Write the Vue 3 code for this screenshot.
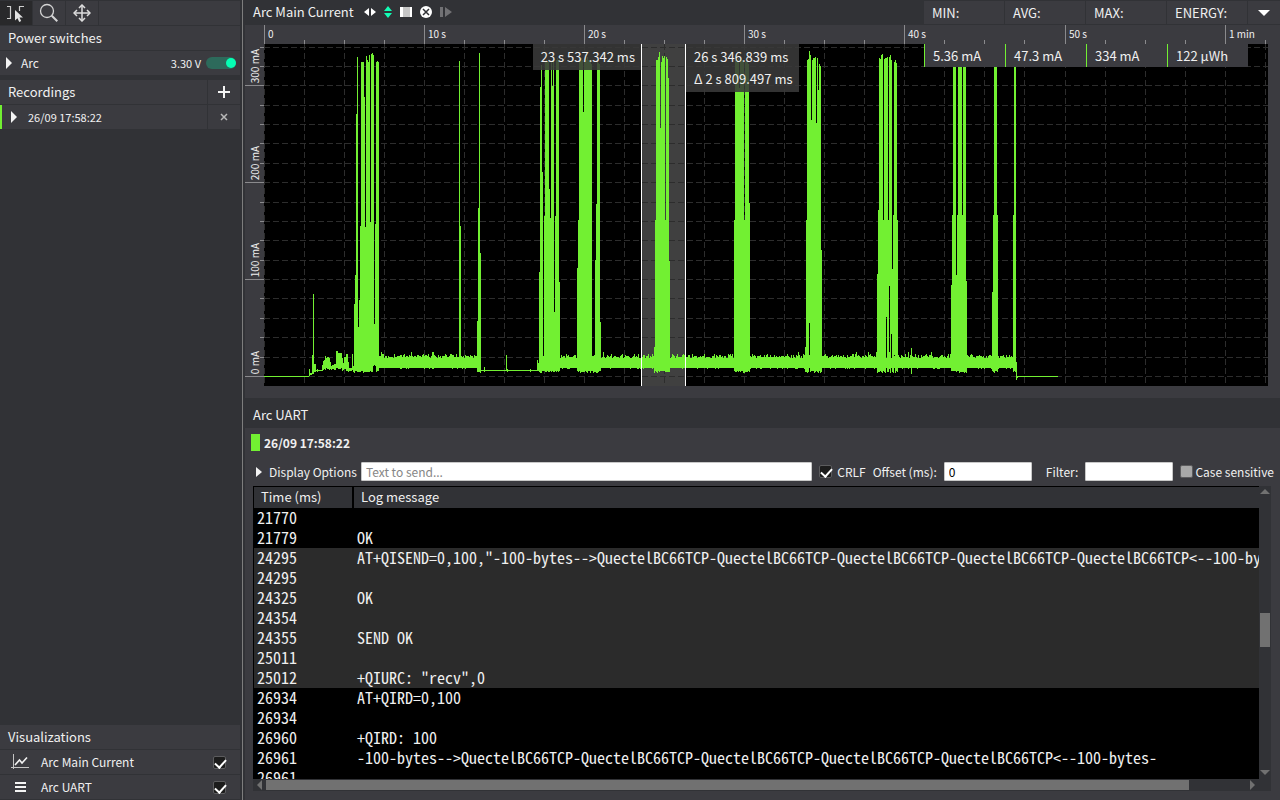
<script setup>
import { ref } from 'vue'

const GRID_LEFT = 264
const GRID_TOP = 44
const PLOT_W = 1004
const PLOT_H = 342

const pctX = (x) => ((x - GRID_LEFT) / PLOT_W) * 100 + '%'
const pctY = (y) => ((y - GRID_TOP) / PLOT_H) * 100 + '%'

const timeNames = { 0: '0', 4: '10 s', 8: '20 s', 12: '30 s', 16: '40 s', 20: '50 s', 24: '1 min' }
const timeTicks = Array.from({ length: 26 }, (_, i) => ({
  x: Math.floor(264.2 + i * 40.04),
  label: timeNames[i],
}))
const currentNames = { 0: '0 mA', 5: '100 mA', 10: '200 mA', 15: '300 mA' }
const currentTicks = Array.from({ length: 18 }, (_, i) => ({
  y: Math.round(376 - i * 19.38),
  label: currentNames[i],
}))

// Consecutive one-pixel columns of each burst: first x, then the top of every column.
const bursts = [
  [354, [304, 275, 114, 57, 327, 300, 226, 62, 62, 62, 97, 227, 56, 60, 62, 55, 222, 54, 53, 55, 324, 224, 62, 61, 62]],
  [459, [61, 226]],
  [477, [321, 208, 53, 253]],
  [537, [360, 363, 272, 87, 65, 172, 357, 216, 61, 60, 62, 61, 189, 218, 62, 86, 60, 312, 216, 60, 58, 60, 282]],
  [577, [268, 220, 60, 59, 58, 60, 112, 62, 58, 60, 57, 60, 60, 62, 64, 356, 356, 355, 260, 204, 62, 63, 64, 322]],
  [654, [347, 220, 60, 60, 57, 52, 128, 62, 56, 58, 56, 220, 57, 59, 78, 261]],
  [734, [220, 60, 62, 60, 58, 88, 60, 58, 60, 62, 220, 62, 60, 62, 64, 203]],
  [805, [347, 220, 60, 59, 51, 55, 120, 60, 58, 58, 57, 123, 58, 90, 64, 66, 250]],
  [877, [274, 210, 58, 59, 55, 54, 220, 59, 58, 58, 57, 220, 57, 55, 60, 269, 215, 62, 60, 63, 220]],
  [951, [285, 215, 60, 58, 60, 275, 215, 60, 58, 57, 60, 215, 60, 59, 60, 281]],
  [992, [292, 215, 60, 58, 60, 215]],
  [1013, [215, 60, 60]],
]
const cutOff = { 809: 323, 886: 317, 889: 286, 891: 334, 894: 355, 375: 366, 374: 365, 373: 366 }

const startup = [
  [264, 45, 376, 377], [309, 1, 369, 376], [310, 2, 373, 375], [312, 1, 355, 374], [313, 1, 294, 374],
  [314, 2, 364, 372], [316, 7, 370, 371], [317, 1, 369, 372], [322, 1, 365, 371], [323, 1, 361, 370],
  [324, 1, 360, 369], [325, 1, 356, 370], [326, 1, 358, 368], [327, 2, 357, 369], [329, 1, 358, 370],
  [330, 1, 362, 369], [331, 1, 366, 370], [332, 2, 365, 369], [334, 2, 364, 370], [336, 2, 351, 368],
  [338, 3, 353, 369], [341, 1, 353, 368], [342, 1, 358, 371], [343, 1, 363, 370], [344, 2, 357, 369],
  [346, 2, 354, 371], [348, 1, 362, 372], [349, 3, 368, 371], [352, 1, 354, 370], [353, 1, 366, 372],
  [481, 56, 370, 371], [484, 1, 367, 372], [506, 1, 355, 371], [507, 1, 369, 372], [530, 1, 369, 372],
  [1016, 1, 362, 380], [1017, 1, 376, 378], [1018, 40, 376, 377],
]

const noise = (n) => {
  const v = Math.sin(n * 127.1) * 43758.5453
  return v - Math.floor(v)
}
const columns = [...startup]
for (let x = 379; x < 1016; x++) {
  if (x >= 480 && x < 539) continue
  const a = noise(x)
  const top = a > 0.97 ? 352 : a > 0.88 ? 354 : a > 0.7 ? 355 : a > 0.4 ? 356 : a > 0.12 ? 357 : 358
  columns.push([x, 1, top, noise(x + 5000) > 0.85 ? 369 : 368])
}
for (const [start, tops] of bursts) {
  tops.forEach((top, i) => {
    const x = start + i
    const low = start === 459 ? 368 : 371 + Math.floor(noise(x + 900) * 2.4)
    columns.push([x, 1, top, cutOff[x] ?? low])
  })
}
columns.push([911, 1, 348, 374])
const signal = columns.map(([x, w, t, b]) => `M${x} ${t}h${w}V${b}h-${w}z`).join('')

const stats = [
  { name: 'MIN:', value: '5.36 mA' },
  { name: 'AVG:', value: '47.3 mA' },
  { name: 'MAX:', value: '334 mA' },
  { name: 'ENERGY:', value: '122 μWh' },
]

const bytes = '-100-bytes-->QuectelBC66TCP-QuectelBC66TCP-QuectelBC66TCP-QuectelBC66TCP-QuectelBC66TCP<--100-bytes-'
const log = [
  ['21770', '', false],
  ['21779', 'OK', false],
  ['24295', 'AT+QISEND=0,100,"' + bytes + '"', true],
  ['24295', '', true],
  ['24325', 'OK', true],
  ['24354', '', true],
  ['24355', 'SEND OK', true],
  ['25011', '', true],
  ['25012', '+QIURC: "recv",0', true],
  ['26934', 'AT+QIRD=0,100', false],
  ['26934', '', false],
  ['26960', '+QIRD: 100', false],
  ['26961', bytes, false],
  ['26961', '', false],
]

const showCurrent = ref(true)
const showUart = ref(true)
const powerOn = ref(true)
const message = ref('')
const crlf = ref(true)
const offset = ref('0')
const filter = ref('')
const caseSensitive = ref(false)
</script>

<template>
  <div class="app">
    <aside class="sidebar">
      <div class="row tools">
        <button class="tool active" aria-label="Select">
          <svg width="20" height="20" viewBox="0 0 20 20"><path d="M1 3.500h3.500v12H1M13.500 8V3.500H18" fill="none" stroke="#cfcfcf" stroke-width="1.200" /><path d="M9 7v10.500l2.500-2.200 1.700 3.700 2-1-1.700-3.500H17z" fill="#e2e2e2" /></svg>
        </button>
        <button class="tool" aria-label="Zoom">
          <svg width="20" height="20" viewBox="0 0 20 20"><circle cx="8" cy="8" r="6.500" fill="none" stroke="#d4d4d4" stroke-width="1.300" /><path d="M12.800 12.800l5.500 5.500" stroke="#d4d4d4" stroke-width="2" /></svg>
        </button>
        <button class="tool" aria-label="Pan">
          <svg width="18" height="18" viewBox="0 0 18 18"><path d="M9 2v14M2 9h14" stroke="#dedede" stroke-width="1.500" /><path d="M6 4l3-3 3 3M6 14l3 3 3-3M4 6L1 9l3 3M14 6l3 3-3 3" fill="none" stroke="#dedede" stroke-width="1.500" /></svg>
        </button>
        <span class="fill"></span>
      </div>
      <h2 class="row title">Power switches</h2>
      <div class="row power">
        <svg class="arrow" width="6" height="12" viewBox="0 0 6 12"><path d="M0 0l6 6-6 6z" fill="#f4f4f4" /></svg>
        <span class="grow">Arc</span>
        <span class="small">3.30 V</span>
        <input v-model="powerOn" class="switch" type="checkbox" aria-label="Arc power" />
      </div>
      <div class="row recordings">
        <h2 class="title grow">Recordings</h2>
        <button class="side-button" aria-label="Add recording">
          <svg width="12" height="12" viewBox="0 0 12 12"><path d="M6 0v12M0 6h12" stroke="#f4f4f4" stroke-width="2" /></svg>
        </button>
      </div>
      <div class="row recording">
        <svg class="arrow" width="6" height="12" viewBox="0 0 6 12"><path d="M0 0l6 6-6 6z" fill="#f4f4f4" /></svg>
        <span class="grow small">26/09 17:58:22</span>
        <button class="side-button" aria-label="Remove recording">
          <svg width="8" height="8" viewBox="0 0 8 8"><path d="M1 1l6 6M7 1L1 7" stroke="#b8b8b8" stroke-width="1.500" /></svg>
        </button>
      </div>
      <div class="spacer"></div>
      <h2 class="row title">Visualizations</h2>
      <label class="row vis">
        <svg width="18" height="16" viewBox="0 0 18 16"><path d="M2.500 0v15M0 13.500h18" stroke="#c4c4c4" fill="none" /><path d="M4 11l4.500-5 2.500 3 5-5.500" stroke="#f2f2f2" stroke-width="1.600" fill="none" /></svg>
        <span class="grow">Arc Main Current</span>
        <input v-model="showCurrent" class="check" type="checkbox" />
      </label>
      <label class="row vis">
        <svg width="18" height="10" viewBox="0 0 18 10"><path d="M4 1h11M4 5h11M4 9h11" stroke="#f4f4f4" stroke-width="2" /></svg>
        <span class="grow">Arc UART</span>
        <input v-model="showUart" class="check" type="checkbox" />
      </label>
    </aside>

    <main class="main">
      <section>
        <header class="chart-header">
          <h2 class="title">Arc Main Current</h2>
          <div class="chart-icons">
            <button aria-label="Fit horizontally"><svg width="12" height="8" viewBox="0 0 12 8"><path d="M5 0v8L0 4zM7 0v8l5-4z" fill="#fff" /></svg></button>
            <button aria-label="Fit vertically"><svg width="8" height="12" viewBox="0 0 8 12"><path d="M0 5h8L4 0zM0 7h8l-4 5z" fill="#12fdb5" /></svg></button>
            <button aria-label="Toggle selection"><svg width="12" height="10" viewBox="0 0 12 10"><path d="M0 0h12v10H0z" fill="#fff" /><path d="M3 0h7v10H3z" fill="#c6c6c6" /></svg></button>
            <button aria-label="Clear selection"><svg width="12" height="12" viewBox="0 0 12 12"><circle cx="6" cy="6" r="6" fill="#fff" /><path d="M3 3l6 6M9 3L3 9" stroke="#313236" stroke-width="1.500" /></svg></button>
            <button aria-label="Follow"><svg width="12" height="10" viewBox="0 0 12 10"><path d="M0 0h3v10H0zM5 0l7 5-7 5z" fill="#717174" /></svg></button>
          </div>
          <div class="stat-names">
            <span v-for="s in stats" :key="s.name">{{ s.name }}</span>
            <button class="stat-menu" aria-label="Statistics menu"><svg width="12" height="6" viewBox="0 0 12 6"><path d="M0 0h12L6 6z" fill="#fff" /></svg></button>
          </div>
        </header>

        <div class="chart">
          <div class="time-axis">
            <span v-for="t in timeTicks" :key="t.x" class="time-tick" :class="{ major: t.label }" :style="{ left: pctX(t.x) }">{{ t.label }}</span>
          </div>
          <div class="current-axis">
            <span v-for="c in currentTicks" :key="c.y" class="current-tick" :class="{ major: c.label }" :style="{ top: pctY(c.y) }"><b>{{ c.label }}</b></span>
          </div>
          <div class="plot">
            <svg class="plot-svg" viewBox="264 44 1004 342" preserveAspectRatio="none" shape-rendering="crispEdges">
              <rect x="642" y="44" width="43" height="342" fill="#404040" />
              <g stroke="#2d2d2d" stroke-width="1" stroke-dasharray="6 3">
                <path v-for="c in currentTicks" :key="c.y" :d="`M264 ${c.y + 0.5}H1268`" />
                <path v-for="t in timeTicks" :key="t.x" :d="`M${t.x + 0.5} 44V386`" />
              </g>
              <path :d="signal" fill="#72f032" />
              <path d="M641 44h1v342h-1zM685 44h1v342h-1z" fill="#fff" />
            </svg>
            <div class="marker from" :style="{ right: 'calc(100% - ' + pctX(641) + ')' }">23 s 537.342 ms</div>
            <div class="marker" :style="{ left: pctX(686) }">26 s 346.839 ms<br />Δ 2 s 809.497 ms</div>
            <div class="stat-values">
              <span v-for="s in stats" :key="s.name">{{ s.value }}</span>
            </div>
          </div>
        </div>
      </section>

      <section class="uart">
        <header class="uart-header"><h2 class="title">Arc UART</h2></header>
        <div class="session"><i></i>26/09 17:58:22</div>
        <form class="controls" @submit.prevent>
          <button type="button" class="options">
            <svg width="6" height="10" viewBox="0 0 6 10"><path d="M0 0l6 5-6 5z" fill="#f4f4f4" /></svg>Display Options
          </button>
          <input v-model="message" class="text message" type="text" placeholder="Text to send..." aria-label="Text to send" />
          <label class="crlf"><input v-model="crlf" class="check" type="checkbox" />CRLF</label>
          <label class="field offset">Offset (ms):<input v-model="offset" class="text" type="text" /></label>
          <label class="field filter">Filter:<input v-model="filter" class="text" type="text" /></label>
          <label class="case"><input v-model="caseSensitive" class="check" type="checkbox" />Case sensitive</label>
        </form>
        <div class="log">
          <div class="log-view">
            <table>
              <thead>
                <tr><th class="time">Time (ms)</th><th>Log message</th></tr>
              </thead>
              <tbody>
                <tr v-for="(r, i) in log" :key="i" :class="{ selected: r[2] }"><td>{{ r[0] }}</td><td>{{ r[1] }}</td></tr>
              </tbody>
            </table>
          </div>
          <div class="vbar">
            <svg width="10" height="5" viewBox="0 0 10 5"><path d="M0 5h10L5 0z" fill="#717171" /></svg>
            <span class="before"></span><span class="thumb"></span><span class="after"></span>
            <svg width="10" height="5" viewBox="0 0 10 5"><path d="M0 0h10L5 5z" fill="#717171" /></svg>
          </div>
          <div class="hbar">
            <svg width="5" height="10" viewBox="0 0 5 10"><path d="M5 0v10L0 5z" fill="#717171" /></svg>
            <span class="thumb"></span><span class="after"></span>
            <svg width="5" height="10" viewBox="0 0 5 10"><path d="M0 0v10l5-5z" fill="#717171" /></svg>
          </div>
        </div>
      </section>
    </main>
  </div>
</template>

<style>
body {
  background: #313236;
}
</style>

<style scoped>
* {
  box-sizing: border-box;
}
.app {
  display: flex;
  height: 100vh;
  overflow: hidden;
  background: #313236;
  color: #f0f0f0;
  font: 13px/20px "Noto Sans CJK SC", "Noto Sans", sans-serif;
}
button {
  display: flex;
  align-items: center;
  justify-content: center;
  padding: 0;
  border: 0;
  background: none;
  color: inherit;
  font: inherit;
}
svg {
  display: block;
  flex: none;
}
.title {
  margin: 0;
  font-size: 13px;
  font-weight: 400;
}
.small {
  font-size: 11px;
}
.grow {
  flex: 1;
}
.sidebar {
  display: flex;
  flex: 0 0 243px;
  flex-direction: column;
  padding: 1px 2px 0 0;
  border-right: 1px solid #7d7d7d;
}
.row {
  display: flex;
  flex: none;
  align-items: center;
  height: 24px;
  margin-bottom: 1px;
  background: #3b3b40;
}
h2.row {
  padding-left: 8px;
}
.tools {
  gap: 1px;
  background: none;
}
.tool {
  width: 32px;
  height: 24px;
  background: #3b3b40;
}
.tool.active {
  background: #29292b;
}
.fill {
  flex: 1;
  height: 24px;
  background: #3b3b40;
}
.power {
  margin-bottom: 5px;
  padding: 0 4px 0 6px;
  font-size: 12px;
}
.power .arrow {
  margin-right: 9px;
}
.switch {
  display: flex;
  justify-content: flex-end;
  width: 30px;
  height: 12px;
  margin: 0 0 0 5px;
  border-radius: 6px;
  background: #2d6a5b;
  appearance: none;
}
.switch::before {
  width: 10px;
  height: 10px;
  margin: 1px 0;
  border-radius: 50%;
  background: #06ffb4;
  content: "";
}
.recordings {
  padding-left: 8px;
}
.side-button {
  width: 33px;
  height: 24px;
  border-left: 1px solid #313236;
}
.recording {
  padding-left: 9px;
  border-left: 2px solid #72f032;
}
.recording .arrow {
  margin-right: 11px;
}
.spacer {
  flex: 1;
}
.vis {
  padding: 0 14px 0 11px;
  font-size: 12px;
}
.vis .grow {
  margin-left: 12px;
}
.check {
  flex: none;
  width: 13px;
  height: 13px;
  margin: 0;
  border: 1px solid #5c5c5e;
  border-radius: 2px;
  background: #a8a8a8;
  appearance: none;
}
.check:checked {
  background: #1c1c1c;
}
.check:checked::before {
  display: block;
  width: 5px;
  height: 9px;
  margin: 0 0 0 3px;
  border: solid #fff;
  border-width: 0 2px 2px 0;
  transform: rotate(42deg);
  content: "";
}
.main {
  display: flex;
  flex: 1;
  flex-direction: column;
  min-width: 0;
  margin-left: 2px;
}
.chart-header {
  display: flex;
  align-items: center;
  height: 25px;
  padding: 0 0 1px 8px;
}
.chart-icons {
  display: flex;
  gap: 8px;
  margin-left: 10px;
}
.stat-names {
  display: flex;
  gap: 1px;
  height: 23px;
  margin: 1px 0 0 auto;
}
.stat-names span {
  width: 80px;
  padding: 2px 0 0 8px;
  background: #3b3b40;
}
.stat-menu {
  width: 32px;
  background: #3b3b40;
}
.chart {
  display: grid;
  grid-template: 19px 342px / 19px 1fr;
  padding: 0 12px 12px 0;
  background: #3b3b40;
}
.time-axis {
  position: relative;
  grid-column: 2;
}
.time-tick {
  position: absolute;
  bottom: 0;
  height: 4px;
  padding-left: 3px;
  border-left: 1px solid #8a8a8d;
  font-size: 10px;
  line-height: 17px;
  white-space: nowrap;
}
.time-tick.major {
  height: 19px;
}
.current-axis {
  position: relative;
}
.current-tick {
  position: absolute;
  right: 0;
  width: 4px;
  border-top: 1px solid #8a8a8d;
}
.current-tick.major {
  width: 19px;
}
.current-tick b {
  position: absolute;
  right: 0;
  bottom: 3px;
  font-size: 10px;
  font-weight: 400;
  line-height: 19px;
  white-space: nowrap;
  writing-mode: vertical-rl;
  transform: rotate(180deg);
}
.plot {
  position: relative;
  background: #000;
}
.plot-svg {
  width: 100%;
  height: 100%;
}
.marker {
  position: absolute;
  top: 0;
  padding: 2px 6px 2px 8px;
  background: rgba(58, 58, 58, 0.88);
  line-height: 22px;
  white-space: nowrap;
}
.stat-values {
  position: absolute;
  top: 0;
  right: 20px;
  display: flex;
}
.stat-values span {
  width: 81px;
  height: 23px;
  padding: 2px 0 0 8px;
  border-left: 1px solid #72f032;
  background: #3b3b40;
}
.uart {
  display: flex;
  flex: 1;
  flex-direction: column;
  min-height: 0;
  background: #3b3b40;
}
.uart-header {
  height: 30px;
  padding: 7px 8px;
  background: #313236;
}
.session {
  display: flex;
  gap: 4px;
  align-items: center;
  height: 29px;
  padding-left: 6px;
  font-size: 12px;
  font-weight: 700;
}
.session i {
  width: 9px;
  height: 17px;
  background: #72f032;
}
.controls {
  display: flex;
  align-items: center;
  height: 29px;
  padding: 0 6px 0 11px;
  font-size: 12px;
  white-space: nowrap;
}
.controls label {
  display: flex;
  align-items: center;
}
.options {
  gap: 7px;
  margin-right: 4px;
}
.text {
  width: 88px;
  height: 19px;
  padding: 0 4px;
  border: 1px solid #c8c8c8;
  border-radius: 1px;
  background: #fff;
  color: #000;
  font: inherit;
}
.message {
  flex: 1;
  min-width: 0;
}
.text::placeholder {
  color: #868686;
}
.crlf {
  gap: 5px;
  margin: 0 7px;
}
.field {
  gap: 7px;
}
.filter {
  margin: 0 7px 0 14px;
}
.case {
  gap: 2px;
}
.log {
  display: grid;
  flex: 1;
  grid-template: 1fr 12px / 1fr 12px;
  min-height: 0;
  margin: 0 9px 9px 8px;
  background: #313236;
}
.log-view {
  overflow: hidden;
  min-width: 0;
  min-height: 0;
  padding: 1px 0 0 1px;
  background: #000;
}
table {
  width: 100%;
  table-layout: fixed;
  border-spacing: 0;
}
th {
  height: 21px;
  padding: 0 0 1px 7px;
  background: #313236;
  font-weight: 400;
  text-align: left;
}
th.time {
  width: 100px;
  border-right: 2px solid #000;
}
td {
  height: 20px;
  padding: 0 0 0 3px;
  font: 16px/18px "Noto Sans Mono CJK SC", "DejaVu Sans Mono", monospace;
  vertical-align: top;
  white-space: pre;
}
.selected {
  background: #2b2b2b;
}
.vbar {
  display: flex;
  flex-direction: column;
  align-items: center;
  padding: 3px 0 4px;
}
.vbar .thumb {
  flex: 0 0 34px;
  width: 10px;
  background: #717171;
}
.vbar .before {
  flex: 118;
}
.vbar .after {
  flex: 121;
}
.hbar {
  display: flex;
  align-items: center;
  padding: 0 4px;
}
.hbar .thumb {
  flex: 922;
  height: 10px;
  margin-left: 4px;
  background: #717171;
}
.hbar .after {
  flex: 61;
}
</style>
